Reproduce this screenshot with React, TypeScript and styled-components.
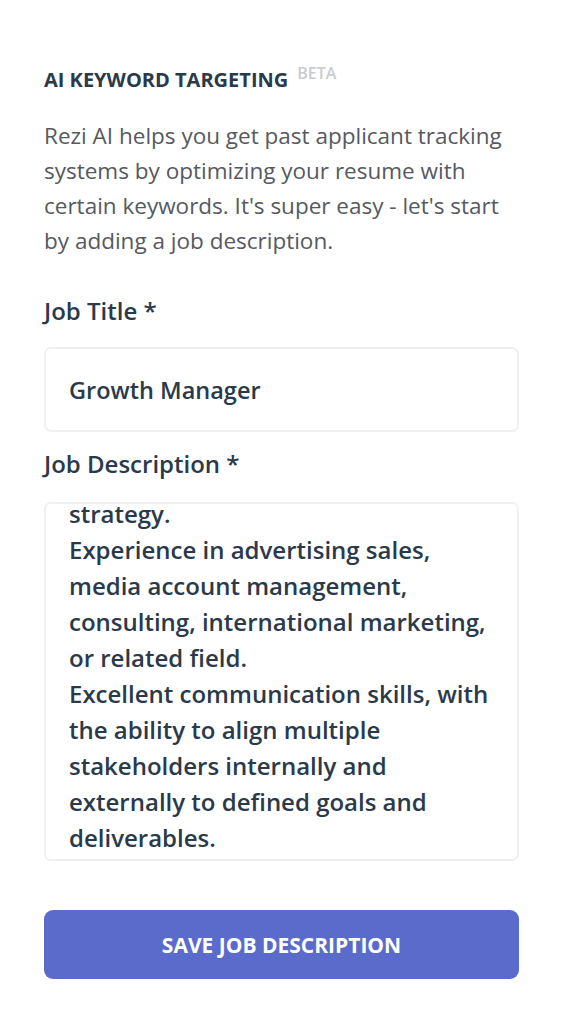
import React, { useEffect, useRef, useState } from 'react';
import styled, { createGlobalStyle } from 'styled-components';

const GlobalStyle = createGlobalStyle`
  html, body {
    margin: 0;
    padding: 0;
    background: #ffffff;
  }
  body {
    font-family: "Open Sans", "Noto Sans", Arial, sans-serif;
    -webkit-font-smoothing: antialiased;
  }
`;

const Page = styled.div`
  box-sizing: border-box;
  width: 100%;
  padding: 64px 43px 40px 44px;
  display: flex;
  flex-direction: column;
`;

const Heading = styled.h2`
  margin: 0;
  font-size: 20px;
  line-height: 32px;
  font-weight: 700;
  color: #2a3a4a;
`;

const Beta = styled.sup`
  margin-left: 9px;
  font-size: 16px;
  font-weight: 600;
  color: #c9ccd0;
  vertical-align: 8px;
  line-height: 0;
`;

const Intro = styled.p`
  margin: 22px 0 0;
  font-size: 22.5px;
  line-height: 35px;
  color: #56595e;
`;

const Field = styled.div<{ $top: number }>`
  display: flex;
  flex-direction: column;
  margin-top: ${p => p.$top}px;
`;

const Label = styled.label<{ $gap: number }>`
  font-size: 24px;
  line-height: 32px;
  font-weight: 600;
  color: #2a3a4a;
  margin-bottom: ${p => p.$gap}px;
`;

const TextInput = styled.input`
  box-sizing: border-box;
  height: 85px;
  width: 100%;
  padding: 0 20px 0 23px;
  border: 2px solid #f0f0f1;
  border-radius: 7px;
  font-family: inherit;
  font-size: 23.5px;
  font-weight: 600;
  color: #2a3a4a;
  outline: none;
  background: #fff;
`;

const TextArea = styled.textarea`
  box-sizing: border-box;
  height: 359px;
  width: 100%;
  padding: 8px 20px 3px 23px;
  border: 2px solid #f0f0f1;
  border-radius: 7px;
  font-family: inherit;
  font-size: 24px;
  line-height: 36px;
  font-weight: 600;
  color: #2a3a4a;
  outline: none;
  resize: none;
  background: #fff;
  scrollbar-width: none;
  &::-webkit-scrollbar {
    display: none;
  }
`;

const SaveButton = styled.button`
  margin-top: 49px;
  height: 69px;
  width: 100%;
  border: none;
  border-radius: 9px;
  background: #5a6bcc;
  color: #ffffff;
  font-family: inherit;
  font-size: 21px;
  font-weight: 700;
  cursor: pointer;
`;

const description = `Drive revenue growth by partnering with key accounts and owning their digital marketing
strategy.
Experience in advertising sales,
media account management,
consulting, international marketing,
or related field.
Excellent communication skills, with
the ability to align multiple
stakeholders internally and
externally to defined goals and
deliverables.`;

export default function App() {
  const [title, setTitle] = useState('Growth Manager');
  const [desc, setDesc] = useState(description);
  const areaRef = useRef<HTMLTextAreaElement>(null);

  useEffect(() => {
    if (areaRef.current) {
      areaRef.current.scrollTop = areaRef.current.scrollHeight;
    }
  }, []);

  return (
    <>
      <GlobalStyle />
      <Page>
        <Heading>
          AI KEYWORD TARGETING<Beta>BETA</Beta>
        </Heading>
        <Intro>
          Rezi AI helps you get past applicant tracking systems by optimizing your resume with
          certain keywords. It's super easy - let's start by adding a job description.
        </Intro>

        <Field $top={37}>
          <Label htmlFor="jobTitle" $gap={20}>Job Title *</Label>
          <TextInput id="jobTitle" value={title} onChange={e => setTitle(e.target.value)} />
        </Field>

        <Field $top={16}>
          <Label htmlFor="jobDesc" $gap={22}>Job Description *</Label>
          <TextArea
            id="jobDesc"
            ref={areaRef}
            value={desc}
            onChange={e => setDesc(e.target.value)}
          />
        </Field>

        <SaveButton type="button">SAVE JOB DESCRIPTION</SaveButton>
      </Page>
    </>
  );
}
